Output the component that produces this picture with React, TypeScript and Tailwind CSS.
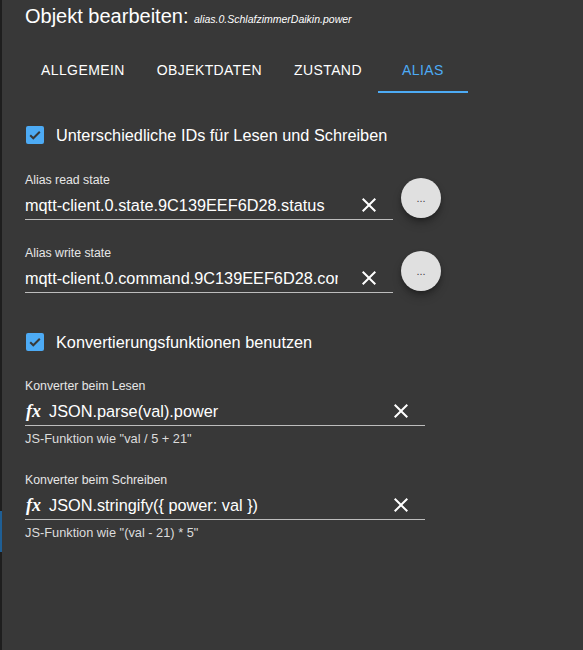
import React from 'react';

const font = { fontFamily: '"Liberation Sans", Arial, sans-serif' };

function CloseIcon() {
  return (
    <svg width="24" height="24" viewBox="0 0 24 24" className="shrink-0">
      <path
        fill="#ffffff"
        d="M19 6.41L17.59 5 12 10.59 6.41 5 5 6.41 10.59 12 5 17.59 6.41 19 12 13.41 17.59 19 19 17.59 13.41 12z"
      />
    </svg>
  );
}

function CheckRow({ label }: { label: string }) {
  return (
    <div className="flex items-center h-[42px]">
      <div className="ml-[1px] w-[18px] h-[18px] rounded-[2px] bg-[#4dabf5] flex items-center justify-center">
        <svg width="14" height="14" viewBox="0 0 14 14">
          <path d="M2.2 7.2l3.1 3.1 6.5-6.5" fill="none" stroke="#383838" strokeWidth="2" />
        </svg>
      </div>
      <span className="ml-[12px] text-[16.3px] text-white">{label}</span>
    </div>
  );
}

function StateField({ label, value }: { label: string; value: string }) {
  return (
    <div className="flex items-start">
      <div className="w-[368px]">
        <div className="text-[12.3px] leading-[14px] text-[#e6e6e6]">{label}</div>
        <div className="h-[33px] pt-[4px] flex items-center border-b border-[#bdbdbd]">
          <div className="w-[313px] overflow-hidden whitespace-nowrap text-[16.3px] text-white">{value}</div>
          <div className="ml-[19px]">
            <CloseIcon />
          </div>
        </div>
      </div>
      <button className="mt-[5px] ml-[8px] w-[40px] h-[40px] rounded-full bg-[#e0e0e0] shadow-[0_3px_5px_-1px_rgba(0,0,0,0.3),0_6px_10px_0_rgba(0,0,0,0.2)] flex items-center justify-center text-[11px] text-[#444] leading-none">
        ...
      </button>
    </div>
  );
}

function ConverterField({ label, value, help }: { label: string; value: string; help: string }) {
  return (
    <div className="w-[400px]">
      <div className="text-[12.3px] leading-[14px] text-[#e6e6e6]">{label}</div>
      <div className="h-[33px] pt-[4px] flex items-center border-b border-[#bdbdbd]">
        <span
          className="ml-[1px] w-[18px] italic font-bold text-[18px] text-white"
          style={{ fontFamily: '"Liberation Serif", "DejaVu Serif", serif' }}
        >
          fx
        </span>
        <span className="ml-[5px] flex-1 text-[16.3px] text-white whitespace-nowrap">{value}</span>
        <div className="mr-[12px]">
          <CloseIcon />
        </div>
      </div>
      <div className="mt-[6px] text-[12.8px] leading-[14px] text-[#dcdcdc]">{help}</div>
    </div>
  );
}

export default function App() {
  const tabs = ['Allgemein', 'Objektdaten', 'Zustand', 'Alias'];
  return (
    <div className="w-full h-[650px] bg-[#383838] flex overflow-hidden" style={font}>
      <div className="w-[2px] flex flex-col">
        <div className="h-[511px] bg-[#1e1e1e]" />
        <div className="h-[41px] bg-[#1f5f95]" />
        <div className="flex-1 bg-[#1e1e1e]" />
      </div>
      <div className="flex-1 pl-[23px]">
        <div className="h-[45px] pt-[2px] text-white">
          <span className="text-[20px] leading-[28px]">Objekt bearbeiten: </span>
          <span className="text-[10.5px] italic">alias.0.SchlafzimmerDaikin.power</span>
        </div>
        <div className="flex h-[48px]">
          {tabs.map((t) => {
            const active = t === 'Alias';
            return (
              <div
                key={t}
                className={
                  'min-w-[90px] px-4 pt-[5px] flex items-center justify-center uppercase text-[14px] tracking-[0.02857em] border-b-2 ' +
                  (active ? 'border-[#4dabf5] text-[#4dabf5]' : 'border-transparent text-white')
                }
              >
                {t}
              </div>
            );
          })}
        </div>
        <div className="mt-[21px]">
          <CheckRow label="Unterschiedliche IDs für Lesen und Schreiben" />
        </div>
        <div className="mt-[17px]">
          <StateField label="Alias read state" value="mqtt-client.0.state.9C139EEF6D28.status" />
        </div>
        <div className="mt-[26px]">
          <StateField label="Alias write state" value="mqtt-client.0.command.9C139EEF6D28.command" />
        </div>
        <div className="mt-[28px]">
          <CheckRow label="Konvertierungsfunktionen benutzen" />
        </div>
        <div className="mt-[16px]">
          <ConverterField
            label="Konverter beim Lesen"
            value="JSON.parse(val).power"
            help={'JS-Funktion wie "val / 5 + 21"'}
          />
        </div>
        <div className="mt-[27px]">
          <ConverterField
            label="Konverter beim Schreiben"
            value="JSON.stringify({ power: val })"
            help={'JS-Funktion wie "(val - 21) * 5"'}
          />
        </div>
      </div>
    </div>
  );
}
